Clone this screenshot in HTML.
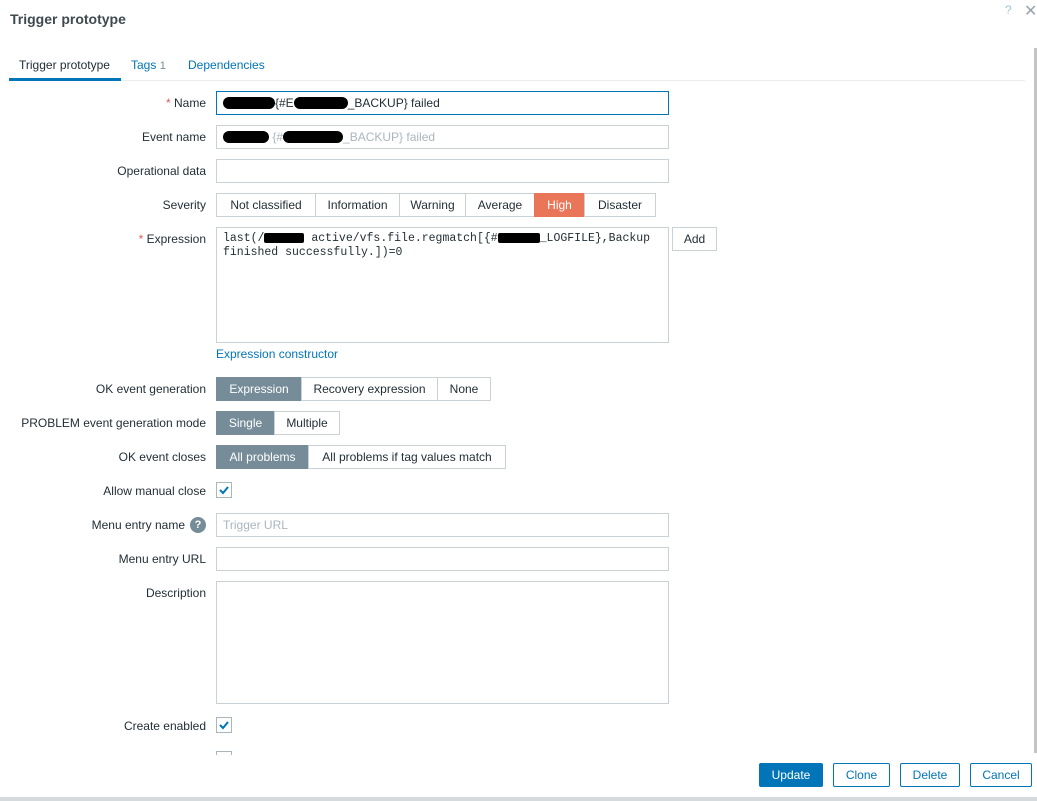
<!DOCTYPE html>
<html><head><meta charset="utf-8"><style>
*{box-sizing:border-box;margin:0;padding:0}
body{width:1037px;height:801px;background:#fff;font:12px "Liberation Sans",Arial,sans-serif;color:#1f2c33;position:relative;overflow:hidden}
.a{position:absolute}
.lbl{position:absolute;right:831px;text-align:right;white-space:nowrap;line-height:24px}
.in{position:absolute;left:216px;width:453px;height:24px;border:1px solid #c9d1d6;background:#fff;padding:0 6px;line-height:22px;white-space:nowrap}
.seg{position:absolute;height:24px;display:flex}
.seg div{border:1px solid #c9d1d6;margin-left:-1px;line-height:22px;white-space:nowrap;background:#fff;text-align:center}
.seg div:first-child{margin-left:0}
.seg .on{background:#768d99;border-color:#768d99;color:#fff}
.seg .hi{background:#e97659;border-color:#e97659;color:#fff}
.cb{position:absolute;left:216px;width:16px;height:16px;border:1px solid #aab6bd;background:#fff}
.st{color:#e45959}
.btn{position:absolute;top:763px;height:24px;border:1px solid #0275b8;color:#0275b8;background:#fff;text-align:center;line-height:22px;border-radius:2px}
.blk{display:inline-block;background:#000;height:12px;vertical-align:-2px;border-radius:6px}
</style></head><body>
<div class="a" style="left:10px;top:11px;font-size:14px;font-weight:bold;color:#3f4a50">Trigger prototype</div>
<div class="a" style="left:1005px;top:3px;color:#9fc5dc;font-size:12px">?</div>
<div class="a" style="left:1024px;top:1px;color:#98a4ab;font-size:16px">✕</div>
<div class="a" style="left:1034px;top:48px;width:3px;height:705px;background:#c4c4c4"></div>
<div class="a" style="left:9px;top:80px;width:1016px;height:1px;background:#ebeef0"></div>
<div class="a" style="left:9px;top:78px;width:112px;height:3px;background:#0275b8"></div>
<div class="a" style="left:19px;top:58px">Trigger prototype</div>
<div class="a" style="left:131px;top:58px;color:#0275b8">Tags <span style="color:#768d99;font-size:11px">1</span></div>
<div class="a" style="left:188px;top:58px;color:#0275b8">Dependencies</div>

<div class="lbl" style="top:91px"><span class="st">*</span> Name</div>
<div class="in" style="top:91px;border-color:#0275b8"><span class="blk" style="width:52px"></span>{#E<span class="blk" style="width:54px"></span>_BACKUP} failed</div>
<div class="lbl" style="top:125px">Event name</div>
<div class="in" style="top:125px;color:#aab6bd"><span class="blk" style="width:46px"></span> {#<span class="blk" style="width:60px"></span>_BACKUP} failed</div>
<div class="lbl" style="top:159px">Operational data</div>
<div class="in" style="top:159px"></div>
<div class="lbl" style="top:193px">Severity</div>
<div class="seg" style="left:216px;top:193px"><div style="width:100px">Not classified</div><div style="width:85px">Information</div><div style="width:67px">Warning</div><div style="width:70px">Average</div><div class="hi" style="width:51px">High</div><div style="width:72px">Disaster</div></div>
<div class="lbl" style="top:227px"><span class="st">*</span> Expression</div>
<div class="in" style="top:227px;height:116px;font:11.5px 'Liberation Mono',monospace;line-height:14px;padding:4px 6px;white-space:nowrap;overflow:hidden">last(/<span class="blk" style="width:40px;height:10px;border-radius:2px"></span> active/vfs.file.regmatch[{#<span class="blk" style="width:42px;height:10px;border-radius:2px"></span>_LOGFILE},Backup<br>finished successfully.])=0</div>
<div class="a" style="left:672px;top:227px;width:45px;height:24px;border:1px solid #c9d1d6;text-align:center;line-height:22px">Add</div>
<div class="a" style="left:216px;top:348px;color:#0275b8;line-height:13px">Expression constructor</div>
<div class="lbl" style="top:377px">OK event generation</div>
<div class="seg" style="left:216px;top:377px"><div class="on" style="width:86px">Expression</div><div style="width:137px">Recovery expression</div><div style="width:54px">None</div></div>
<div class="lbl" style="top:411px">PROBLEM event generation mode</div>
<div class="seg" style="left:216px;top:411px"><div class="on" style="width:59px">Single</div><div style="width:66px">Multiple</div></div>
<div class="lbl" style="top:445px">OK event closes</div>
<div class="seg" style="left:216px;top:445px"><div class="on" style="width:93px">All problems</div><div style="width:198px">All problems if tag values match</div></div>
<div class="lbl" style="top:479px">Allow manual close</div>
<div class="cb" style="top:482px"><svg width="14" height="14" viewBox="0 0 14 14"><path d="M3 7l3 3 5-6" fill="none" stroke="#0275b8" stroke-width="2"/></svg></div>
<div class="lbl" style="top:513px;right:852px">Menu entry name</div>
<div class="a" style="left:190px;top:517px;width:16px;height:16px;border-radius:50%;background:#768d99;color:#fff;font-weight:bold;text-align:center;line-height:16px;font-size:11px">?</div>
<div class="in" style="top:513px;color:#aab6bd">Trigger URL</div>
<div class="lbl" style="top:547px">Menu entry URL</div>
<div class="in" style="top:547px"></div>
<div class="lbl" style="top:581px">Description</div>
<div class="in" style="top:581px;height:123px"></div>
<div class="lbl" style="top:714px">Create enabled</div>
<div class="cb" style="top:717px"><svg width="14" height="14" viewBox="0 0 14 14"><path d="M3 7l3 3 5-6" fill="none" stroke="#0275b8" stroke-width="2"/></svg></div>
<div class="a" style="left:216px;top:751px;width:16px;height:4px;border:1px solid #aab6bd;border-bottom:none"></div>

<div class="btn" style="left:759px;width:64px;background:#0275b8;color:#fff">Update</div>
<div class="btn" style="left:833px;width:57px">Clone</div>
<div class="btn" style="left:900px;width:60px">Delete</div>
<div class="btn" style="left:970px;width:62px">Cancel</div>
<div class="a" style="left:0;top:797px;width:1037px;height:4px;background:#d5dadd"></div>
</body></html>
